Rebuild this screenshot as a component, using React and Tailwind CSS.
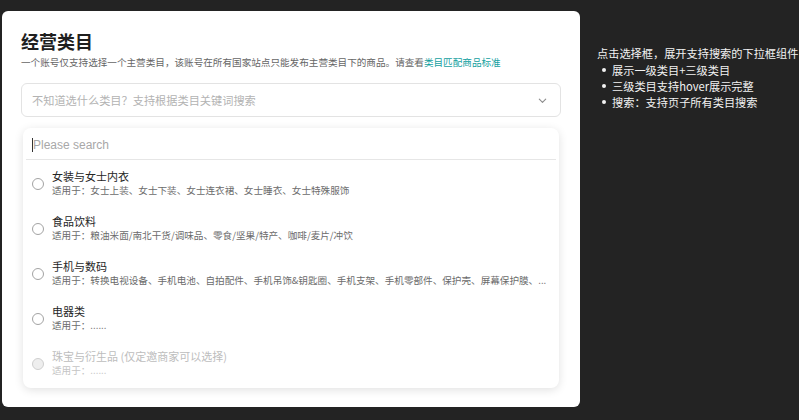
import React from "react";

const cjk = { fontFamily: '"Noto Sans CJK SC", "Noto Sans", sans-serif' };

const categories = [
  {
    name: "女装与女士内衣",
    desc: "适用于：女士上装、女士下装、女士连衣裙、女士睡衣、女士特殊服饰",
  },
  {
    name: "食品饮料",
    desc: "适用于：粮油米面/南北干货/调味品、零食/坚果/特产、咖啡/麦片/冲饮",
  },
  {
    name: "手机与数码",
    desc: "适用于：转换电视设备、手机电池、自拍配件、手机吊饰&钥匙圈、手机支架、手机零部件、保护壳、屏幕保护膜、...",
  },
  { name: "电器类", desc: "适用于：......" },
  { name: "珠宝与衍生品 (仅定邀商家可以选择)", desc: "适用于：......", disabled: true },
];

const Chevron = () => (
  <svg width="11" height="11" viewBox="0 0 12 12" fill="none" className="text-[#8c8c8c]">
    <path d="M2.5 4.5 6 8l3.5-3.5" stroke="currentColor" strokeWidth="1.2" strokeLinecap="round" strokeLinejoin="round" />
  </svg>
);

const CategoryOption = ({ item }) => (
  <div className="flex h-[45px] items-center gap-[8px] pl-[9px] pr-[8px]">
    <span
      className={`mt-[2px] h-[12px] w-[12px] shrink-0 rounded-full border ${
        item.disabled ? "border-[#cfcfcf] bg-[#eeeeee]" : "border-[#a3a3a3] bg-white"
      }`}
    />
    <div className="min-w-0 flex-1">
      <div className={`text-[11px] leading-[14px] ${item.disabled ? "text-[#bdbdbd]" : "text-[#262626]"}`}>
        {item.name}
      </div>
      <div className={`whitespace-nowrap text-[9.6px] leading-[14px] ${item.disabled ? "text-[#c4c4c4]" : "text-[#6b6b6b]"}`}>
        {item.desc}
      </div>
    </div>
  </div>
);

export default function App() {
  return (
    <div className="flex h-[420px] w-full overflow-hidden bg-[#232323]" style={cjk}>
      <div className="ml-[2px] mt-[11px] h-[396px] w-[578px] shrink-0 rounded-md bg-white px-[19px] pt-[18px]">
        <h1 className="text-[18px] font-bold leading-[24px] text-[#1f1f1f]">经营类目</h1>
        <p className="mt-[2px] whitespace-nowrap text-[9.6px] leading-[14px] text-[#666666]">
          一个账号仅支持选择一个主营类目，该账号在所有国家站点只能发布主营类目下的商品。请查看
          <span className="text-[#139f9f]">类目匹配商品标准</span>
        </p>

        <div className="relative mt-[14px]">
          <div className="flex h-[34px] items-center justify-between rounded-md border border-[#e3e3e3] bg-white pl-[10px] pr-[12px]">
            <span className="text-[11.2px] text-[#b3b3b3]">不知道选什么类目？支持根据类目关键词搜索</span>
            <Chevron />
          </div>

          <div className="absolute left-[2px] top-[45px] h-[260px] w-[536px] rounded-lg bg-white shadow-[0_2px_10px_rgba(0,0,0,0.12)]">
            <div className="mx-[3px] flex h-[32px] items-center border-b border-[#e6e6e6] pl-[6px] pt-[2px]">
              <span className="h-[14px] border-l border-[#333333]" />
              <span
                className="text-[12px] text-[#a8a8a8]"
                style={{ fontFamily: '"Liberation Sans", Arial, sans-serif' }}
              >
                Please search
              </span>
            </div>
            <div>
              {categories.map((item) => (
                <CategoryOption key={item.name} item={item} />
              ))}
            </div>
          </div>
        </div>
      </div>

      <div className="ml-[17px] pt-[45px] text-[11.2px] leading-[16px] text-[#f2f2f2]">
        <div className="whitespace-nowrap">点击选择框，展开支持搜索的下拉框组件</div>
        <ul className="mt-[1px]">
          {["展示一级类目+三级类目", "三级类目支持hover展示完整", "搜索：支持页子所有类目搜索"].map((t) => (
            <li key={t} className="flex items-center whitespace-nowrap">
              <span className="ml-[5px] mr-[6px] h-[4px] w-[4px] rounded-full bg-[#f2f2f2]" />
              {t}
            </li>
          ))}
        </ul>
      </div>
    </div>
  );
}
